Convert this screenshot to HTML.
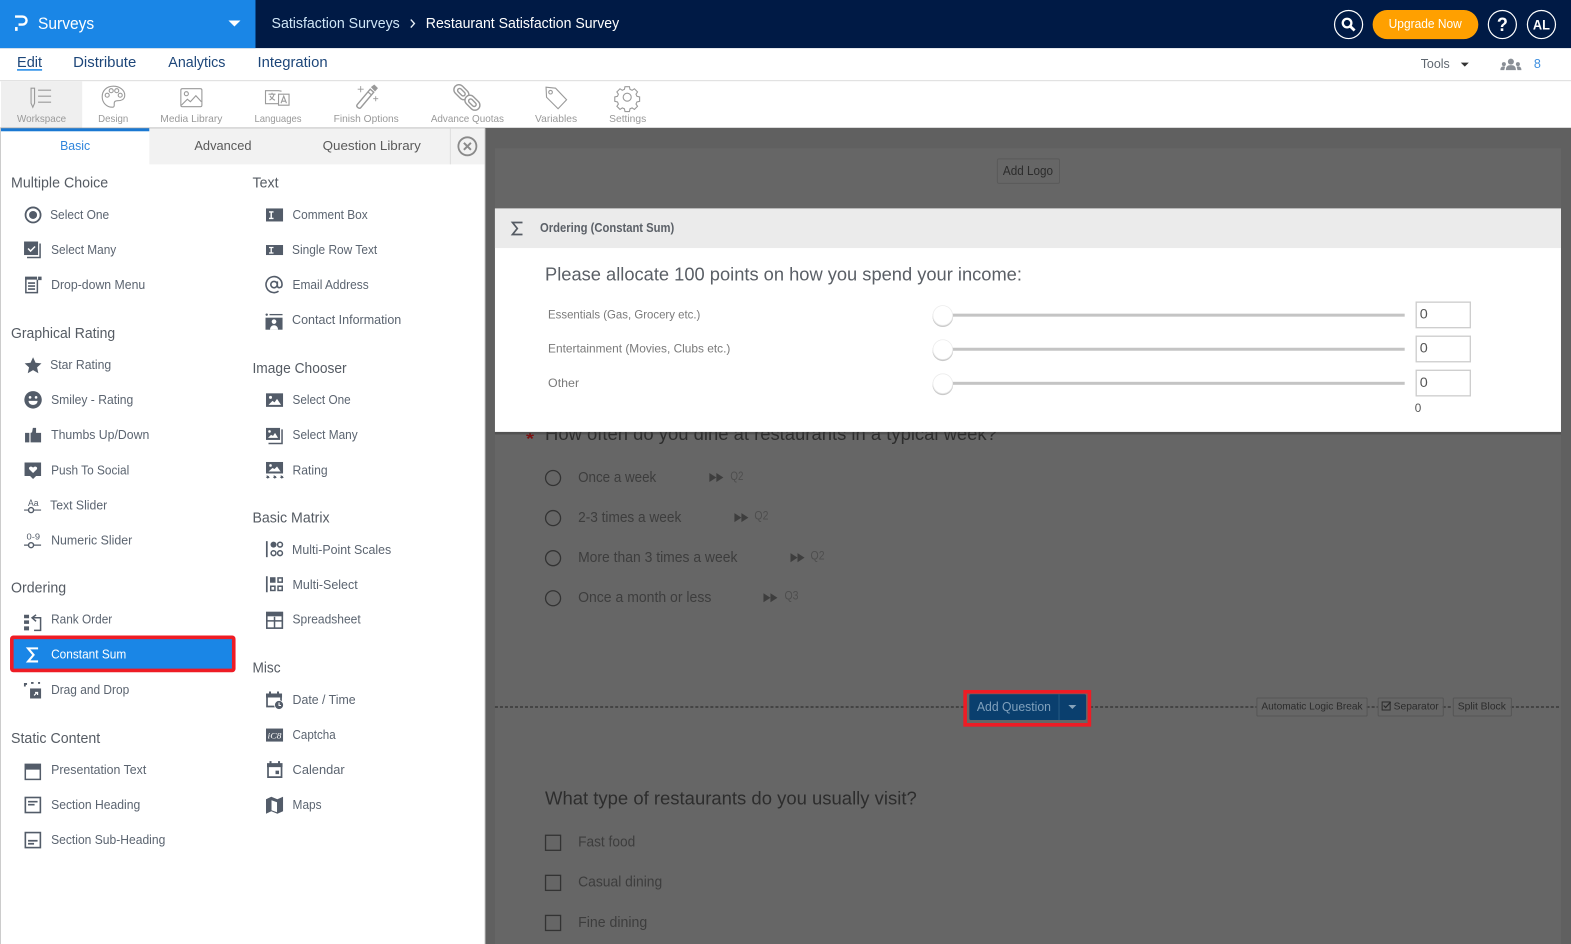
<!DOCTYPE html>
<html lang="en">
<head>
<meta charset="utf-8">
<title>Restaurant Satisfaction Survey</title>
<style>
html,body{margin:0;padding:0;width:1571px;height:944px;overflow:hidden;background:#fff}
svg{display:block}
text{font-family:"Liberation Sans",sans-serif;white-space:pre}
.i{font-size:12.5px;fill:#5b6470;transform:translateY(-.7px)}
.h{font-size:14.5px;fill:#555b63;transform:translateY(-.7px)}
.t{font-size:10.5px;fill:#999}
.n{font-size:14.5px;fill:#1d4679}
.ic{fill:#535c69}
.ol{fill:none;stroke:#535c69;stroke-width:1.6}
.tb{fill:none;stroke:#9a9a9a;stroke-width:1.1}
.q{font-size:18.5px}
.o{font-size:14.5px;fill:#3d3d3d;transform:translateY(-.7px)}
.j{font-size:11.5px;fill:#4e4e4e;transform:translateY(-.6px)}
.l{font-size:12px;fill:#7a7a7a}
.sm{font-size:10.5px;fill:#2b2b2b;transform:translateY(-.8px)}
</style>
</head>
<body>
<svg xmlns="http://www.w3.org/2000/svg" width="1571" height="944" viewBox="0 0 1568 942" preserveAspectRatio="none">
<rect width="1568" height="942" fill="#fff"/>

<!-- Top bar -->
<rect x="0" y="0" width="1568" height="48" fill="#001a45"/>
<rect x="0" y="0" width="255" height="48" fill="#1a86e6"/>
<path d="M15 16.500h7.500a4 4 0 0 1 0 8H18.500" fill="none" stroke="#fff" stroke-width="2.400"/>
<rect x="15" y="27" width="2.600" height="3.800" fill="#fff"/>
<text x="38" y="29" font-size="16.500" fill="#fff" textLength="56" lengthAdjust="spacingAndGlyphs">Surveys</text>
<path d="M228 20.500h12l-6 6z" fill="#fff"/>
<text x="271" y="28" font-size="14.500" fill="#cfe6f7" textLength="128" lengthAdjust="spacingAndGlyphs">Satisfaction Surveys</text>
<path d="M410 19.500l3.600 4-3.600 4" fill="none" stroke="#e8f1f8" stroke-width="1.400"/>
<text x="425" y="28" font-size="14.500" fill="#fff" textLength="193" lengthAdjust="spacingAndGlyphs">Restaurant Satisfaction Survey</text>

<circle cx="1346" cy="24.500" r="14" fill="none" stroke="#fff" stroke-width="1.200"/>
<circle cx="1344.500" cy="23" r="4.300" fill="none" stroke="#fff" stroke-width="2.300"/>
<path d="M1347.600 26.200l4.400 4.200" stroke="#fff" stroke-width="2.800"/>
<rect x="1370" y="10" width="105.500" height="29" rx="14.500" fill="#ffa000"/>
<text x="1386" y="28" font-size="12.500" font-weight="500" fill="#fff" textLength="73" lengthAdjust="spacingAndGlyphs">Upgrade Now</text>
<circle cx="1499.500" cy="24.500" r="14" fill="none" stroke="#fff" stroke-width="1.200"/>
<text x="1494" y="31" font-size="19" font-weight="700" fill="#fff" textLength="11" lengthAdjust="spacingAndGlyphs">?</text>
<circle cx="1538.500" cy="24.500" r="14" fill="none" stroke="#fff" stroke-width="1.200"/>
<text x="1530" y="29.500" font-size="13.500" font-weight="700" fill="#fff" textLength="17" lengthAdjust="spacingAndGlyphs">AL</text>

<!-- Nav row -->
<text class="n" x="17" y="67" textLength="25" lengthAdjust="spacingAndGlyphs">Edit</text>
<rect x="17" y="69" width="25" height="1.500" fill="#1a86e6"/>
<text class="n" x="73" y="67" textLength="63" lengthAdjust="spacingAndGlyphs">Distribute</text>
<text class="n" x="168" y="67" textLength="57" lengthAdjust="spacingAndGlyphs">Analytics</text>
<text class="n" x="257" y="67" textLength="70" lengthAdjust="spacingAndGlyphs">Integration</text>
<text x="1418" y="68" font-size="12.500" fill="#5f6770" textLength="29" lengthAdjust="spacingAndGlyphs">Tools</text>
<path d="M1458 62.500h8l-4 4z" fill="#333"/>
<g fill="#8a8f96">
<circle cx="1508" cy="61.500" r="3"/><path d="M1503 70c0-3.500 1.500-5 5-5s5 1.500 5 5z"/>
<circle cx="1501" cy="64" r="2"/><path d="M1497.500 70c0-2.500 1-3.800 3.500-3.800l1.200.3-.8 3.500z"/>
<circle cx="1515" cy="64" r="2"/><path d="M1518.500 70c0-2.500-1-3.800-3.500-3.800l-1.200.3.800 3.500z"/>
</g>
<text x="1531" y="68" font-size="12.500" fill="#3d8fe0" textLength="7" lengthAdjust="spacingAndGlyphs">8</text>
<rect x="0" y="80" width="1568" height="1" fill="#dcdcdc"/>

<!-- Toolbar -->
<rect x="1" y="81" width="81" height="47" fill="#efefef"/>
<g class="tb">
<path d="M31 88h3.500v15l-1.750 4-1.750-4z"/><path d="M38 90h13M38 96h13M38 102h13"/>
<path d="M113 86c6.500 0 11.500 4 11.500 9 0 4.500-4 5.500-7 5.500-2.500 0-3.500 1-3.500 2.500 0 2 .5 4-2 4-5.500 0-10-4.500-10-10.500S106.500 86 113 86z"/>
<circle cx="107" cy="95" r="2"/><circle cx="111" cy="90.500" r="2"/><circle cx="116.500" cy="90.500" r="2"/><circle cx="120" cy="95" r="2"/>
<rect x="180.500" y="88.500" width="21" height="18" rx="1.500"/>
<circle cx="186" cy="93.500" r="2"/><path d="M181 105l6-6 3 2.500 5.500-6 5.500 6"/>
<path d="M278 100v3.500h-13v-13h13l3 .5"/><path d="M278 94h10.500v11h-10.500z" fill="#fff"/>
<path d="M268 94h7M271.500 92.500v1.500M269 100c2.500-1.500 4-3.500 4.500-6M269.500 95.500c1 2 2.800 3.500 5 4.500M280.500 103l2.700-7 2.700 7M281.500 101h3.500"/>
<path d="M356.500 104.500l13-15.500 3.500 3-13 15.500c-1.500 1.500-5-1-3.500-3z" stroke-width="1.400"/><path d="M367 91.500l3.500 3"/>
<path d="M371 87l2.500-2 3 3-2.200 2.500z" fill="#9a9a9a"/>
<path d="M360 86v6M357 89h6M375 96v5M372.500 98.500h5" stroke-width=".9"/>
<g stroke-width="1.400">
<rect x="-5" y="-8.500" width="10" height="17" rx="5" transform="translate(460.500,92) rotate(-45)"/>
<rect x="-2" y="-4.500" width="4" height="9" rx="2" transform="translate(460.500,92) rotate(-45)"/>
<rect x="-5" y="-8.500" width="10" height="17" rx="5" transform="translate(471.500,102.500) rotate(-45)" fill="#fff"/>
<rect x="-2" y="-4.500" width="4" height="9" rx="2" transform="translate(471.500,102.500) rotate(-45)"/>
</g>
<path d="M545 87l9.500 1 11 11.500-8.500 9-11.500-11.500z"/><circle cx="549.500" cy="92" r="1.800"/>
<circle cx="626" cy="97" r="4"/>
<g transform="translate(626,97)">
<path d="M-2.200-10.500h4.400l.6 2.700 2.100.9 2.300-1.500 3.100 3.100-1.500 2.300.9 2.100 2.700.6v4.400l-2.700.6-.9 2.100 1.500 2.300-3.100 3.100-2.300-1.500-2.100.9-.6 2.700h-4.400l-.6-2.700-2.100-.9-2.300 1.500-3.100-3.100 1.500-2.300-.9-2.100-2.700-.6v-4.400l2.700-.6.9-2.100-1.500-2.300 3.100-3.100 2.300 1.500 2.100-.9z"/>
</g>
</g>
<text class="t" x="17" y="122" textLength="49" lengthAdjust="spacingAndGlyphs">Workspace</text>
<text class="t" x="98" y="122" textLength="30" lengthAdjust="spacingAndGlyphs">Design</text>
<text class="t" x="160" y="122" textLength="62" lengthAdjust="spacingAndGlyphs">Media Library</text>
<text class="t" x="254" y="122" textLength="47" lengthAdjust="spacingAndGlyphs">Languages</text>
<text class="t" x="333" y="122" textLength="65" lengthAdjust="spacingAndGlyphs">Finish Options</text>
<text class="t" x="430" y="122" textLength="73" lengthAdjust="spacingAndGlyphs">Advance Quotas</text>
<text class="t" x="534" y="122" textLength="42" lengthAdjust="spacingAndGlyphs">Variables</text>
<text class="t" x="608" y="122" textLength="37" lengthAdjust="spacingAndGlyphs">Settings</text>

<!-- Dark main background -->
<rect x="0" y="127.500" width="1568" height="815" fill="#606060"/>
<rect x="494" y="148" width="1064" height="794" fill="#666"/>

<!-- Left panel -->
<rect x="0" y="128" width="484" height="814" fill="#fff"/>
<rect x="0" y="128" width="1" height="814" fill="#ccc"/>
<rect x="149" y="128" width="335" height="36" fill="#f2f2f2"/>
<rect x="1" y="128" width="148" height="3" fill="#1a78d2"/>
<rect x="449" y="128" width="1" height="36" fill="#ddd"/>
<text x="60" y="149.500" font-size="13" fill="#2f85dc" textLength="30" lengthAdjust="spacingAndGlyphs">Basic</text>
<text x="194" y="149.500" font-size="13" fill="#5a5a5a" textLength="57" lengthAdjust="spacingAndGlyphs">Advanced</text>
<text x="322" y="149.500" font-size="13" fill="#5a5a5a" textLength="98" lengthAdjust="spacingAndGlyphs">Question Library</text>
<circle cx="466.500" cy="146" r="9" fill="none" stroke="#8a8a8a" stroke-width="1.800"/>
<path d="M463 142.500l7 7M470 142.500l-7 7" stroke="#8a8a8a" stroke-width="2"/>

<!-- Headings -->
<text class="h" x="11" y="188" textLength="97" lengthAdjust="spacingAndGlyphs">Multiple Choice</text>
<text class="h" x="11" y="338" textLength="104" lengthAdjust="spacingAndGlyphs">Graphical Rating</text>
<text class="h" x="11" y="592" textLength="55" lengthAdjust="spacingAndGlyphs">Ordering</text>
<text class="h" x="11" y="742" textLength="89" lengthAdjust="spacingAndGlyphs">Static Content</text>
<text class="h" x="252" y="188" textLength="26" lengthAdjust="spacingAndGlyphs">Text</text>
<text class="h" x="252" y="373" textLength="94" lengthAdjust="spacingAndGlyphs">Image Chooser</text>
<text class="h" x="252" y="522" textLength="77" lengthAdjust="spacingAndGlyphs">Basic Matrix</text>
<text class="h" x="252" y="672" textLength="28" lengthAdjust="spacingAndGlyphs">Misc</text>

<!-- Highlight -->
<rect x="11.800" y="636" width="221.500" height="33" rx="1.500" fill="#1a86e6" stroke="#ee1c25" stroke-width="3.600"/>

<!-- Left items -->
<text class="i" x="50" y="219" textLength="59" lengthAdjust="spacingAndGlyphs">Select One</text>
<text class="i" x="51" y="254" textLength="65" lengthAdjust="spacingAndGlyphs">Select Many</text>
<text class="i" x="51" y="289" textLength="94" lengthAdjust="spacingAndGlyphs">Drop-down Menu</text>
<text class="i" x="50" y="369" textLength="61" lengthAdjust="spacingAndGlyphs">Star Rating</text>
<text class="i" x="51" y="404" textLength="82" lengthAdjust="spacingAndGlyphs">Smiley - Rating</text>
<text class="i" x="51" y="439" textLength="98" lengthAdjust="spacingAndGlyphs">Thumbs Up/Down</text>
<text class="i" x="51" y="474" textLength="78" lengthAdjust="spacingAndGlyphs">Push To Social</text>
<text class="i" x="50" y="509" textLength="57" lengthAdjust="spacingAndGlyphs">Text Slider</text>
<text class="i" x="51" y="544" textLength="81" lengthAdjust="spacingAndGlyphs">Numeric Slider</text>
<text class="i" x="51" y="623" textLength="61" lengthAdjust="spacingAndGlyphs">Rank Order</text>
<text x="51" y="657.300" font-size="12.500" fill="#fff" textLength="75" lengthAdjust="spacingAndGlyphs">Constant Sum</text>
<text class="i" x="51" y="693" textLength="78" lengthAdjust="spacingAndGlyphs">Drag and Drop</text>
<text class="i" x="51" y="773" textLength="95" lengthAdjust="spacingAndGlyphs">Presentation Text</text>
<text class="i" x="51" y="808" textLength="89" lengthAdjust="spacingAndGlyphs">Section Heading</text>
<text class="i" x="51" y="843" textLength="114" lengthAdjust="spacingAndGlyphs">Section Sub-Heading</text>

<!-- Right items -->
<text class="i" x="292" y="219" textLength="75" lengthAdjust="spacingAndGlyphs">Comment Box</text>
<text class="i" x="291.500" y="254" textLength="85" lengthAdjust="spacingAndGlyphs">Single Row Text</text>
<text class="i" x="292" y="289" textLength="76" lengthAdjust="spacingAndGlyphs">Email Address</text>
<text class="i" x="291.500" y="324" textLength="109" lengthAdjust="spacingAndGlyphs">Contact Information</text>
<text class="i" x="292" y="404" textLength="58" lengthAdjust="spacingAndGlyphs">Select One</text>
<text class="i" x="292" y="439" textLength="65" lengthAdjust="spacingAndGlyphs">Select Many</text>
<text class="i" x="292" y="474" textLength="35" lengthAdjust="spacingAndGlyphs">Rating</text>
<text class="i" x="291.500" y="553.500" textLength="99" lengthAdjust="spacingAndGlyphs">Multi-Point Scales</text>
<text class="i" x="292" y="588.500" textLength="65" lengthAdjust="spacingAndGlyphs">Multi-Select</text>
<text class="i" x="292" y="623" textLength="68" lengthAdjust="spacingAndGlyphs">Spreadsheet</text>
<text class="i" x="292" y="703" textLength="63" lengthAdjust="spacingAndGlyphs">Date / Time</text>
<text class="i" x="292" y="738" textLength="43" lengthAdjust="spacingAndGlyphs">Captcha</text>
<text class="i" x="292" y="773" textLength="52" lengthAdjust="spacingAndGlyphs">Calendar</text>
<text class="i" x="292" y="808" textLength="29" lengthAdjust="spacingAndGlyphs">Maps</text>

<!-- Left icons -->
<circle class="ol" cx="33" cy="214.500" r="7.500" style="stroke-width:1.800"/><circle class="ic" cx="33" cy="214.500" r="4"/>
<g transform="translate(24,241)">
<rect class="ic" width="14" height="13.500"/><path d="M4 7l2.500 2.500L11 5" fill="none" stroke="#fff" stroke-width="1.500"/><path d="M16 2v14H3" fill="none" stroke="#535c69" stroke-width="1.500"/></g>
<g transform="translate(25,276)"><path class="ic" d="M0 0h12v3H0zM13 0h3.500v3.500H13z"/><path d="M.8 1v15h11.500V3" fill="none" stroke="#535c69" stroke-width="1.500"/><path d="M3 6.500h7M3 9.500h7M3 12.500h7" stroke="#535c69" stroke-width="1.600"/></g>
<path class="ic" d="M33 356.500l2.500 5.500 5.900.6-4.400 4 1.300 5.900-5.300-3.100-5.300 3.100 1.300-5.900-4.400-4 5.900-.6z"/>
<g transform="translate(33,399)"><circle class="ic" r="8.700"/><circle cx="-3" cy="-2.500" r="1.300" fill="#fff"/><circle cx="3" cy="-2.500" r="1.300" fill="#fff"/><path d="M-4.500 1h9c0 2.500-2 4-4.500 4s-4.500-1.500-4.500-4z" fill="#fff"/></g>
<path class="ic" d="M25 432h4.300v9.500H25zM30.500 441.500v-9.500l1.500-.5.800-4.500h3.200v5h5v9.500z"/>
<path class="ic" d="M24.500 461.500h16.500v13.500h-5l-3 3-3-3h-5.500z"/><path d="M33 472l-3.700-3.600c-1.500-2 1.500-4 3.700-1.700 2.200-2.300 5.200-.3 3.700 1.700z" fill="#fff"/>
<text x="28" y="505" font-size="9.500" fill="#535c69" textLength="10.500" lengthAdjust="spacingAndGlyphs">Aa</text>
<path d="M24 509h17" stroke="#535c69" stroke-width="1.200"/><circle cx="31" cy="509" r="2.500" fill="#fff" stroke="#535c69" stroke-width="1.400"/>
<text x="26.500" y="538.500" font-size="8.500" fill="#535c69" textLength="13.500" lengthAdjust="spacingAndGlyphs">0-9</text>
<path d="M24 544h17" stroke="#535c69" stroke-width="1.200"/><circle cx="31" cy="544" r="2.500" fill="#fff" stroke="#535c69" stroke-width="1.400"/>
<g transform="translate(24,613)"><path class="ic" d="M0 .5h5v3.500H0zM0 6h5v3.500H0zM0 12h5v4H0z"/><path d="M9 3.500h7.500V16H10" fill="none" stroke="#535c69" stroke-width="1.500"/><path d="M12 .5L8 3.500l4 3.500" fill="none" stroke="#535c69" stroke-width="1.500"/></g>
<path d="M38 647h-10l5.500 6.500-5.500 6.500h10" fill="none" stroke="#fff" stroke-width="2.100"/>
<g transform="translate(24,680)"><path d="M.8 5V2.500H3M7 1.500h2.500M14 1.500h2" stroke="#535c69" stroke-width="1.800" fill="none"/><rect class="ic" x="6" y="7" width="11" height="10"/><path d="M10 14l3-3M11 11h2.500v2.500" stroke="#fff" stroke-width="1.200" fill="none"/></g>
<g transform="translate(24.500,762)"><rect class="ic" width="16.500" height="16.500"/><rect x="1.500" y="6" width="13.500" height="9" fill="#fff"/></g>
<g transform="translate(24.500,795)"><rect x=".8" y=".8" width="15" height="15" fill="none" stroke="#535c69" stroke-width="1.600"/><path d="M3.500 5h9.500M3.500 8h6.500" stroke="#535c69" stroke-width="1.700"/></g>
<g transform="translate(24.500,830)"><rect x=".8" y=".8" width="15" height="15" fill="none" stroke="#535c69" stroke-width="1.600"/><path d="M3.500 9h9.500M3.500 12h6" stroke="#535c69" stroke-width="1.700"/></g>

<!-- Right icons -->
<g transform="translate(265.500,208)"><rect class="ic" width="17" height="13"/><path d="M3 3.500h4.500M3 10h4.500M5.200 3.500v6.500" stroke="#fff" stroke-width="1.400"/></g>
<g transform="translate(265.500,244.500)"><rect class="ic" width="17" height="10"/><path d="M3 2.500h4.500M3 8h4.500M5.200 2.500V8" stroke="#fff" stroke-width="1.300"/></g>
<circle class="ol" cx="273.500" cy="284" r="3.200"/>
<path class="ol" d="M276.800 280.800v4.500c0 2.500 4.700 2.500 4.700-1.300a8 8 0 1 0-3.500 6.600"/>
<g transform="translate(265,313)"><rect class="ic" x="0" y="4" width="17" height="12"/><circle cx="1.200" cy="1" r="1.200" class="ic"/><rect class="ic" x="4" y=".3" width="13" height="1.300"/><circle cx="8.500" cy="8" r="2.300" fill="#fff"/><path d="M4.500 16c0-3 2-4.500 4-4.500s4 1.500 4 4.500z" fill="#fff"/></g>
<g transform="translate(265.500,392.500)"><rect class="ic" width="17" height="13.500"/><circle cx="4.500" cy="4" r="1.500" fill="#fff"/><path d="M2.500 11.500l4-4 2 1.500 2.500-3.500 4 6z" fill="#fff"/></g>
<g transform="translate(265.500,427)"><rect class="ic" width="14" height="12"/><circle cx="3.500" cy="3.500" r="1.300" fill="#fff"/><path d="M2 10l3-3 2 1 2-3 3 5z" fill="#fff"/><path d="M16 1.500v14H2.500" fill="none" stroke="#535c69" stroke-width="1.500"/></g>
<g transform="translate(265.500,461)"><rect class="ic" width="17" height="11.500"/><circle cx="4.500" cy="3.500" r="1.300" fill="#fff"/><path d="M2.500 9.500l4-3.500 2 1 2.500-2.500 3.500 5z" fill="#fff"/><path d="M.5 14l1.100 1 1-.6-.3 1.400 1 1-1.500 0-.6 1-.5-1-1.500 0 1-1-.3-1.400zM7.500 14l1.100 1 1-.6-.3 1.400 1 1-1.500 0-.6 1-.5-1-1.500 0 1-1-.3-1.400zM14.500 14l1.100 1 1-.6-.3 1.400 1 1-1.500 0-.6 1-.5-1-1.500 0 1-1-.3-1.400z" class="ic" transform="translate(.6,-.8)"/></g>
<g transform="translate(265.500,540)"><path d="M.8 0v16" stroke="#535c69" stroke-width="1.700"/><circle class="ic" cx="7.500" cy="3.500" r="3"/><circle cx="14" cy="3.500" r="2.400" fill="none" stroke="#535c69" stroke-width="1.500"/><circle cx="7.500" cy="12" r="2.400" fill="none" stroke="#535c69" stroke-width="1.500"/><circle cx="14" cy="12" r="2.400" fill="none" stroke="#535c69" stroke-width="1.500"/></g>
<g transform="translate(265.500,575)"><path d="M.8 0v16" stroke="#535c69" stroke-width="1.700"/><rect class="ic" x="4" y="1" width="5.500" height="5.500"/><rect x="12" y="1.700" width="4.200" height="4.200" fill="none" stroke="#535c69" stroke-width="1.500"/><rect x="4.700" y="10" width="4.200" height="4.200" fill="none" stroke="#535c69" stroke-width="1.500"/><rect x="12" y="10" width="4.200" height="4.200" fill="none" stroke="#535c69" stroke-width="1.500"/></g>
<g transform="translate(265.500,610.500)"><rect x=".8" y=".8" width="15.500" height="15.500" fill="none" stroke="#535c69" stroke-width="1.600"/><rect class="ic" width="17" height="4.500"/><path d="M1 9h15M8.500 5v11" stroke="#535c69" stroke-width="1.500"/></g>
<g transform="translate(265.500,690)"><path d="M1 4h14v11H1z" fill="none" stroke="#535c69" stroke-width="1.700"/><path class="ic" d="M0 2h16v4H0zM3 0h2v3H3zM11 0h2v3h-2z"/><circle class="ic" cx="13" cy="13.500" r="4.500" stroke="#fff" stroke-width=".8"/><path d="M13 11v3h2" stroke="#fff" stroke-width="1" fill="none"/></g>
<g transform="translate(265.500,727)"><rect class="ic" width="17" height="13"/><text x="1.500" y="10" font-size="8" font-style="italic" fill="#fff" style="font-family:'Liberation Serif',serif" textLength="14" lengthAdjust="spacingAndGlyphs">iC8</text></g>
<g transform="translate(266.500,759.500)"><path d="M1 4h13.500v12H1z" fill="none" stroke="#535c69" stroke-width="1.700"/><path class="ic" d="M0 2h15.500v4H0zM2.500 0h2v3h-2zM11 0h2v3h-2z"/><rect class="ic" x="8.500" y="9.500" width="3.500" height="3.500"/></g>
<path class="ic" d="M265.500 797.500l5.300-2.500 6 2.500 5.700-2.500v14.500l-5.700 2.500-6-2.500-5.300 2.500zM271 798.500v10l5.500 2v-10z" fill-rule="evenodd"/>

<!-- Panel edge -->
<rect x="483.500" y="128" width="1" height="814" fill="#d0d0d0"/>

<!-- Main card contents behind modal -->
<rect x="995.500" y="158.500" width="62" height="24.500" rx="1.500" fill="none" stroke="#5a5a5a"/>
<text x="1001" y="174.500" font-size="13" fill="#2c2c2c" textLength="50" lengthAdjust="spacingAndGlyphs">Add Logo</text>

<text x="525" y="443" font-size="16" font-weight="700" fill="#7c1212" textLength="8" lengthAdjust="spacingAndGlyphs">*</text>
<text class="q" x="544" y="439" fill="#2d2d2d" textLength="451" lengthAdjust="spacingAndGlyphs">How often do you dine at restaurants in a typical week?</text>

<g fill="none" stroke="#333" stroke-width="1.300">
<circle cx="552" cy="477" r="7.500"/><circle cx="552" cy="517" r="7.500"/><circle cx="552" cy="557" r="7.500"/><circle cx="552" cy="597" r="7.500"/>
</g>
<text class="o" x="577" y="481.500" textLength="78" lengthAdjust="spacingAndGlyphs">Once a week</text>
<text class="o" x="577" y="521.500" textLength="103" lengthAdjust="spacingAndGlyphs">2-3 times a week</text>
<text class="o" x="577" y="561.500" textLength="159" lengthAdjust="spacingAndGlyphs">More than 3 times a week</text>
<text class="o" x="577" y="601.500" textLength="133" lengthAdjust="spacingAndGlyphs">Once a month or less</text>
<g fill="#3e3e3e">
<path d="M708 472l7 4.500-7 4.500zM715 472l7 4.500-7 4.500z"/>
<path d="M733 512l7 4.500-7 4.500zM740 512l7 4.500-7 4.500z"/>
<path d="M789 552l7 4.500-7 4.500zM796 552l7 4.500-7 4.500z"/>
<path d="M762 592l7 4.500-7 4.500zM769 592l7 4.500-7 4.500z"/>
</g>
<text class="j" x="729" y="479.500" textLength="13" lengthAdjust="spacingAndGlyphs">Q2</text>
<text class="j" x="753" y="519" textLength="14" lengthAdjust="spacingAndGlyphs">Q2</text>
<text class="j" x="809" y="559" textLength="14" lengthAdjust="spacingAndGlyphs">Q2</text>
<text class="j" x="783" y="599" textLength="14" lengthAdjust="spacingAndGlyphs">Q3</text>

<!-- Separator row -->
<path d="M494 705.500H962M1088 705.500H1254M1364 705.500H1375M1440 705.500H1450M1508 705.500H1558" stroke="#222" stroke-width="1" stroke-dasharray="3 2" fill="none"/>
<rect x="963.300" y="690.300" width="124" height="33" fill="none" stroke="#ee1c25" stroke-width="3.600"/>
<rect x="967.500" y="692.800" width="116.500" height="25.700" rx="1.500" fill="#0a3f6e"/>
<rect x="1056.500" y="692.800" width="1" height="25.700" fill="#265a85"/>
<text x="975" y="709.500" font-size="13" fill="#7fa0bc" textLength="74" lengthAdjust="spacingAndGlyphs">Add Question</text>
<path d="M1066.300 703.500h8l-4 4z" fill="#86a3bb"/>
<g fill="none" stroke="#555" stroke-width="1">
<rect x="1254.500" y="696.500" width="110" height="18" rx="1"/>
<rect x="1375.500" y="696.500" width="65" height="18" rx="1"/>
<rect x="1450.500" y="696.500" width="58" height="18" rx="1"/>
</g>
<text class="sm" x="1259" y="709" textLength="101" lengthAdjust="spacingAndGlyphs">Automatic Logic Break</text>
<rect x="1379.500" y="700.500" width="8" height="8" fill="none" stroke="#2b2b2b" stroke-width="1"/>
<path d="M1381 704l2 2 5-5.500" fill="none" stroke="#2b2b2b" stroke-width="1.200"/>
<text class="sm" x="1391" y="709" textLength="45" lengthAdjust="spacingAndGlyphs">Separator</text>
<text class="sm" x="1455" y="709" textLength="48" lengthAdjust="spacingAndGlyphs">Split Block</text>

<!-- Second question -->
<text class="q" x="544" y="803" fill="#2d2d2d" textLength="371" lengthAdjust="spacingAndGlyphs">What type of restaurants do you usually visit?</text>
<g fill="none" stroke="#333" stroke-width="1.300">
<rect x="544.500" y="833.500" width="15" height="15"/><rect x="544.500" y="873.500" width="15" height="15"/><rect x="544.500" y="913.500" width="15" height="15"/>
</g>
<text class="o" x="577" y="845.500" textLength="57" lengthAdjust="spacingAndGlyphs">Fast food</text>
<text class="o" x="577" y="885.500" textLength="84" lengthAdjust="spacingAndGlyphs">Casual dining</text>
<text class="o" x="577" y="925.500" textLength="69" lengthAdjust="spacingAndGlyphs">Fine dining</text>

<!-- Modal -->
<rect x="494" y="208" width="1064" height="224" fill="#3a3a3a" opacity=".45" transform="translate(0,1.500)"/>
<rect x="494" y="208" width="1064" height="223" fill="#fff"/>
<rect x="494" y="208" width="1064" height="39.500" fill="#ebebeb"/>
<path d="M521.500 222h-10l4.800 6-4.800 6h10" fill="none" stroke="#555b63" stroke-width="1.700"/>
<text x="539" y="231.500" font-size="12.500" font-weight="700" fill="#5b6067" textLength="134" lengthAdjust="spacingAndGlyphs">Ordering (Constant Sum)</text>
<text class="q" x="544" y="280" fill="#5a5f66" textLength="476" lengthAdjust="spacingAndGlyphs">Please allocate 100 points on how you spend your income:</text>
<text class="l" x="547" y="318" textLength="152" lengthAdjust="spacingAndGlyphs">Essentials (Gas, Grocery etc.)</text>
<text class="l" x="547" y="352" textLength="182" lengthAdjust="spacingAndGlyphs">Entertainment (Movies, Clubs etc.)</text>
<text class="l" x="547" y="386" textLength="31" lengthAdjust="spacingAndGlyphs">Other</text>
<g fill="#c4c4c4">
<rect x="945" y="313" width="457" height="3"/><rect x="945" y="347" width="457" height="3"/><rect x="945" y="381" width="457" height="3"/>
</g>
<g fill="#bdbdbd" opacity=".8">
<circle cx="941" cy="316" r="10.300"/><circle cx="941" cy="350" r="10.300"/><circle cx="941" cy="384" r="10.300"/>
</g>
<g fill="#fff" stroke="#ececec" stroke-width=".8">
<circle cx="941" cy="314.800" r="9.800"/><circle cx="941" cy="348.800" r="9.800"/><circle cx="941" cy="382.800" r="9.800"/>
</g>
<g fill="#fff" stroke="#cccccc" stroke-width="1.300">
<rect x="1413.500" y="301.500" width="54" height="25.500"/><rect x="1413.500" y="335.500" width="54" height="25.500"/><rect x="1413.500" y="369.500" width="54" height="25.500"/>
</g>
<g font-size="13.500" fill="#555">
<text x="1417" y="318" textLength="8" lengthAdjust="spacingAndGlyphs">0</text>
<text x="1417" y="352" textLength="8" lengthAdjust="spacingAndGlyphs">0</text>
<text x="1417" y="386" textLength="8" lengthAdjust="spacingAndGlyphs">0</text>
</g>
<text x="1412" y="411" font-size="11.500" fill="#555" textLength="6.500" lengthAdjust="spacingAndGlyphs">0</text>
</svg>
</body>
</html>
